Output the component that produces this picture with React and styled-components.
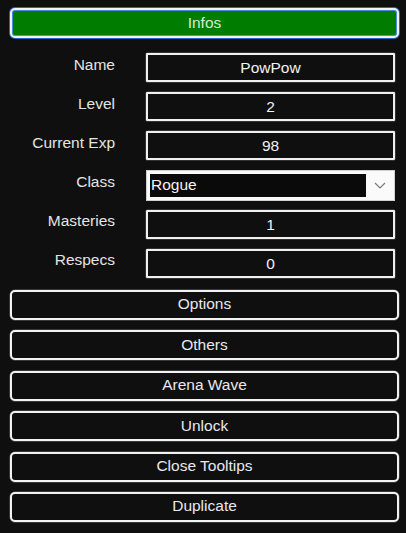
import React from 'react';
import styled, { createGlobalStyle } from 'styled-components';

const GlobalStyle = createGlobalStyle`
  html, body {
    margin: 0;
    padding: 0;
    background: #0f0f0f;
  }
  body {
    font-family: "Liberation Sans", Arial, sans-serif;
    font-size: 15.5px;
    color: #e6e6e6;
  }
`;

const Panel = styled.div`
  display: flex;
  flex-direction: column;
  padding: 8px 7px 0 10px;
  width: 406px;
  height: 533px;
  box-sizing: border-box;
`;

const Button = styled.div`
  height: 30px;
  box-sizing: border-box;
  display: flex;
  align-items: center;
  justify-content: center;
  border: 2.5px solid #f2f2f2;
  border-radius: 5px;
  background: ${(p) => (p.$active ? '#007c00' : '#0f0f0f')};
  color: ${(p) => (p.$active ? '#d6ecd6' : '#e8e8f0')};
  box-shadow: ${(p) =>
    p.$active
      ? '0 0 0 1px #2465c4, inset 0 0 0 1px #4a8ae0'
      : '0 0 0 0.5px rgba(255,255,255,0.35)'};
  padding-bottom: 1px;
`;

const Form = styled.div`
  display: grid;
  grid-template-columns: 105px 249px;
  column-gap: 31px;
  row-gap: 10.2px;
  grid-auto-rows: 29px;
  margin: 15px 0 12px;
`;

const Label = styled.div`
  text-align: right;
  align-self: center;
  padding-bottom: 6px;
  color: #e4e4e4;
`;

const Field = styled.div`
  box-sizing: border-box;
  border: 2px solid #f0f0f0;
  border-radius: 1px;
  box-shadow: 0 0 0 0.5px rgba(255,255,255,0.3);
  display: flex;
  align-items: center;
  justify-content: center;
  color: #f2f2f2;
  padding-top: 1px;
`;

const Select = styled.div`
  box-sizing: border-box;
  background: #fafafa;
  border: 1px solid #d0d0d0;
  padding: 3px 0 3px 3px;
  display: flex;
  height: 31px;
  margin-top: -1px;
`;

const SelectValue = styled.div`
  flex: 1;
  background: #0a0a0a;
  color: #f2f2f2;
  display: flex;
  align-items: center;
  padding-left: 1px;
  padding-bottom: 1px;
`;

const Caret = styled.div`
  width: 28px;
  display: flex;
  align-items: center;
  justify-content: center;
`;

const Buttons = styled.div`
  display: flex;
  flex-direction: column;
  gap: 10.4px;
`;

const rows = [
  ['Name', 'PowPow'],
  ['Level', '2'],
  ['Current Exp', '98'],
  ['Class', null],
  ['Masteries', '1'],
  ['Respecs', '0'],
];

const actions = ['Options', 'Others', 'Arena Wave', 'Unlock', 'Close Tooltips', 'Duplicate'];

export default function App() {
  return (
    <>
      <GlobalStyle />
      <Panel>
        <Button $active>Infos</Button>
        <Form>
          {rows.map(([label, value]) => (
            <React.Fragment key={label}>
              <Label>{label}</Label>
              {value === null ? (
                <Select>
                  <SelectValue>Rogue</SelectValue>
                  <Caret>
                    <svg width="12" height="7" viewBox="0 0 12 7">
                      <path d="M1 1l5 5 5-5" fill="none" stroke="#7a7a7a" strokeWidth="1.2" />
                    </svg>
                  </Caret>
                </Select>
              ) : (
                <Field>{value}</Field>
              )}
            </React.Fragment>
          ))}
        </Form>
        <Buttons>
          {actions.map((a) => (
            <Button key={a}>{a}</Button>
          ))}
        </Buttons>
      </Panel>
    </>
  );
}
